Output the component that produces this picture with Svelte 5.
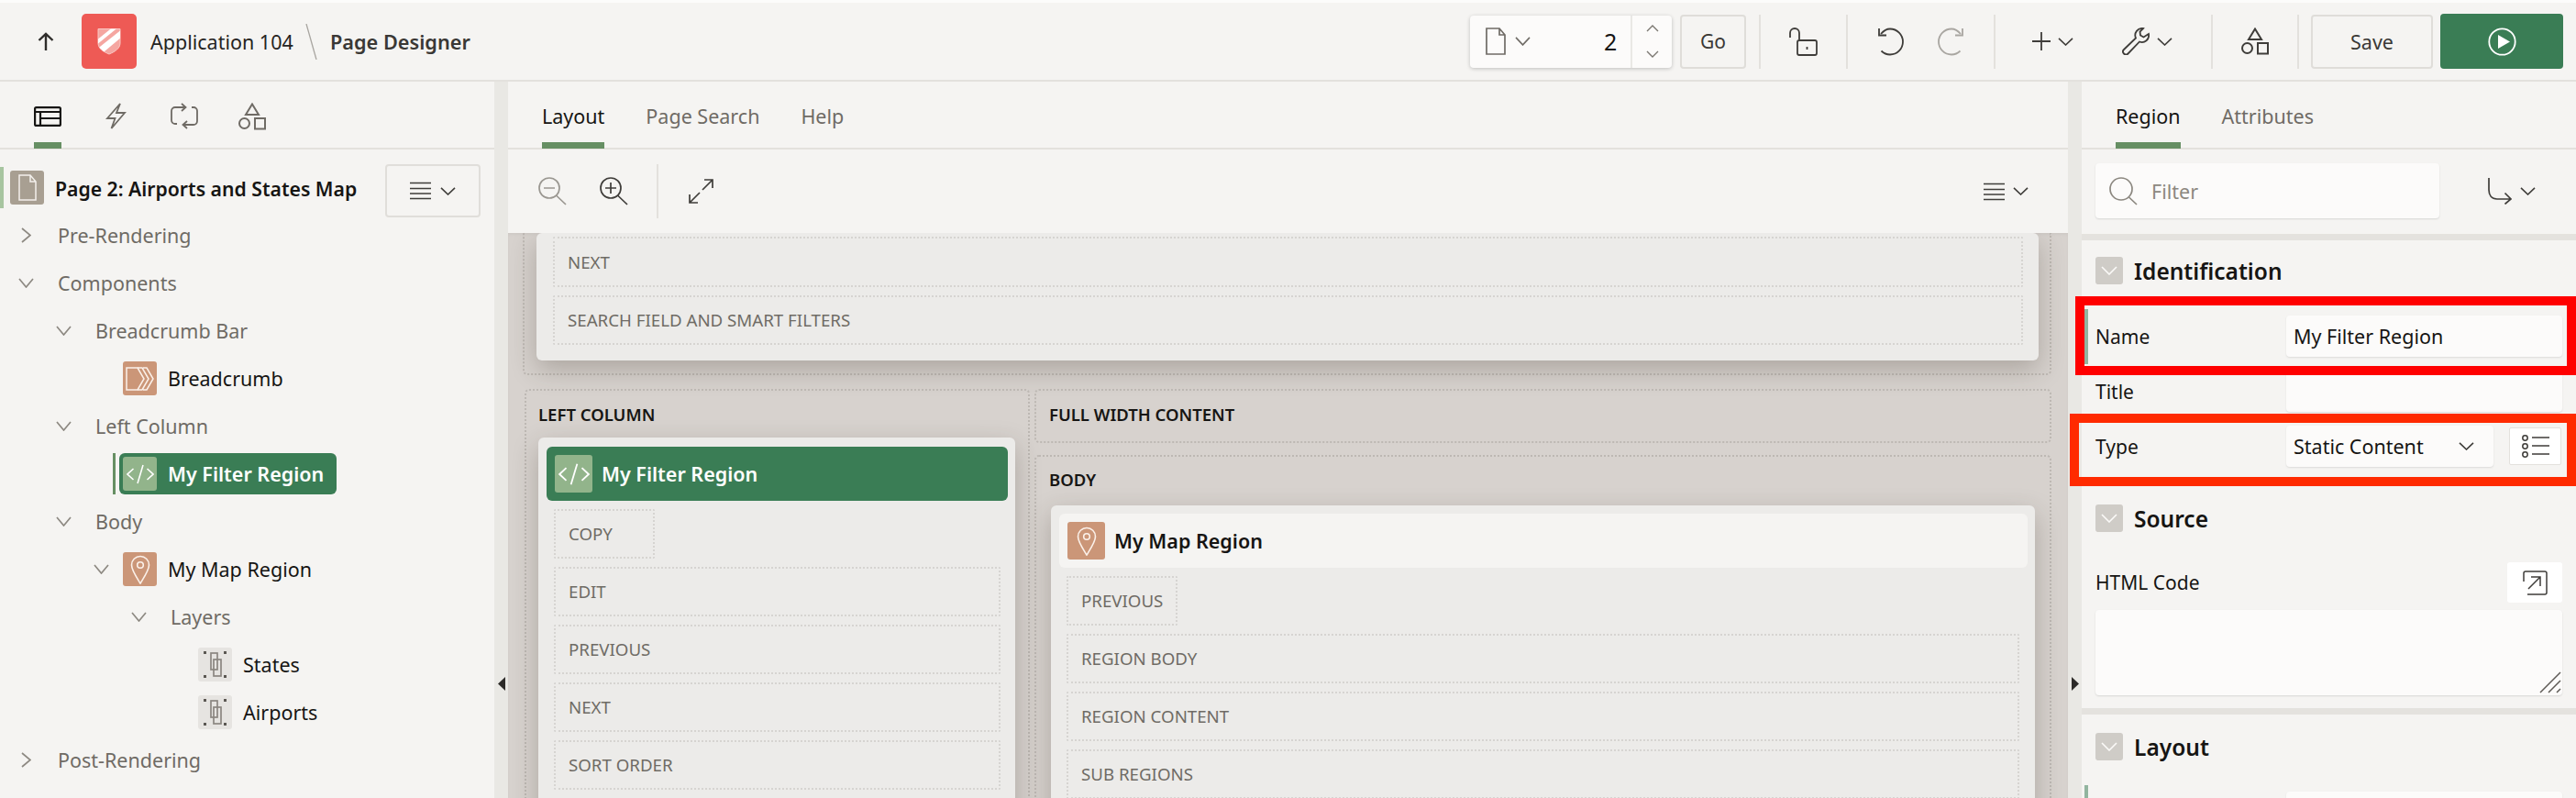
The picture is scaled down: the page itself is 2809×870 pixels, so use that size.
<script>
  const topRows = ['NEXT', 'SEARCH FIELD AND SMART FILTERS'];
  const leftRows = ['EDIT', 'PREVIOUS', 'NEXT', 'SORT ORDER'];
  const bodyRows = ['REGION BODY', 'REGION CONTENT', 'SUB REGIONS'];
</script>

{#snippet chev(w = 17, h = 9, color = '#3f3d3a')}
  <svg class="ic" width={w} height={h} viewBox="0 0 17 9" preserveAspectRatio="none" fill="none" stroke={color} stroke-width="1.6"><path d="M1 .8 8.5 8 16 .8"/></svg>
{/snippet}
{#snippet treeDown()}
  <span class="chev"><svg width="17" height="11" viewBox="0 0 17 11" fill="none" stroke="#8d8982" stroke-width="1.7"><path d="M1 1l7.5 9L16 1"/></svg></span>
{/snippet}
{#snippet treeRight()}
  <span class="chev"><svg width="11" height="17" viewBox="0 0 11 17" fill="none" stroke="#8d8982" stroke-width="1.7"><path d="M1 1l9 7.5L1 16"/></svg></span>
{/snippet}
{#snippet burger(color = '#3f3d3a')}
  <svg class="ic" width="23" height="20" viewBox="0 0 23 20" fill="none" stroke={color} stroke-width="1.7"><path d="M0 1.5h23M0 7.5h23M0 13h23M0 18.5h23"/></svg>
{/snippet}
{#snippet shapes(color)}
  <svg class="ic" width="30" height="30" viewBox="0 0 30 30" fill="none" stroke={color} stroke-width="2"><path d="M15 1.5 22 13H8z"/><circle cx="6.5" cy="22.5" r="5.5"/><rect x="18" y="17" width="11" height="11.5"/></svg>
{/snippet}
{#snippet pin()}
  <svg width="22" height="32" viewBox="0 0 22 32" fill="none" stroke="#fbf1ea" stroke-width="1.6"><path d="M11 31C6 23 1.5 16.5 1.5 11a9.5 9.5 0 0 1 19 0C20.500 16.500 16 23 11 31z"/><circle cx="11" cy="11" r="3.300"/></svg>
{/snippet}
{#snippet code(size = 30)}
  <svg width={size} height={size} viewBox="0 0 30 30" fill="none" stroke="#fff" stroke-width="1.600"><path d="M7.500 9 1 15l6.500 6M22.500 9 29 15l-6.500 6M18 5l-6 20"/></svg>
{/snippet}
{#snippet layer()}
  <span class="tico layer">
    <svg width="27" height="33" viewBox="0 0 27 33" fill="none"><g fill="#5b5853"><rect x="1" y="2" width="3" height="3"/><rect x="23" y="2" width="3" height="3"/><rect x="1" y="28" width="3" height="3"/><rect x="23" y="28" width="3" height="3"/></g><g stroke="#8b8781" stroke-width="1.700"><rect x="9" y="4" width="7" height="18"/><rect x="12" y="11" width="8" height="18"/></g></svg>
  </span>
{/snippet}
{#snippet sectionHead(title)}
  <div class="sect-head">
    <span class="sect-box"><svg width="18" height="10" viewBox="0 0 18 10" fill="none" stroke="#fbfaf8" stroke-width="1.600"><path d="M1 1l8 8 8-8"/></svg></span>
    <span class="sect-title">{title}</span>
  </div>
{/snippet}

<div class="app">
  <header class="top">
    <div class="brand">
      <svg class="up" width="18" height="20" viewBox="0 0 18 20" fill="none" stroke="#2f2d2b" stroke-width="2.400"><path d="M9 20V2M1.500 9 9 1.800 16.500 9"/></svg>
      <span class="logo">
        <svg width="26" height="30" viewBox="0 0 26 30">
          <defs><clipPath id="sh"><path d="M1 1.500h24V17c0 6-6 9.500-12 12C7 26.500 1 23 1 17z"/></clipPath></defs>
          <path d="M1 1.500h24V17c0 6-6 9.500-12 12C7 26.500 1 23 1 17z" fill="#f5a6a1" stroke="#f9c9c5" stroke-width="1"/>
          <g clip-path="url(#sh)" fill="#fff"><path d="M-2 15 19-2h6L-2 20z"/><path d="M-2 25 27 2v8L2 31h-4z"/></g>
        </svg>
      </span>
      <span class="app-name">Application 104</span>
      <svg class="slash" width="13" height="39" viewBox="0 0 13 39" fill="none" stroke="#a8a5a0" stroke-width="1.300"><path d="M1 0l11 39"/></svg>
      <span class="designer">Page Designer</span>
    </div>

    <div class="tools">
      <div class="pagegroup">
        <svg class="ic pg-doc" width="22" height="30" viewBox="0 0 22 30" fill="none" stroke="#6f6b65" stroke-width="1.700"><path d="M1 1h14l6 7v21H1zM15 1v7h6"/></svg>
        <span class="pg-chev">{@render chev(17, 10, '#6f6b65')}</span>
        <span class="pg-num">2</span>
        <span class="pg-spin">
          <svg width="14" height="8" viewBox="0 0 14 8" fill="none" stroke="#7b7771" stroke-width="1.400"><path d="M1 7l6-6 6 6"/></svg>
          <svg width="14" height="8" viewBox="0 0 14 8" fill="none" stroke="#7b7771" stroke-width="1.400"><path d="M1 1l6 6 6-6"/></svg>
        </span>
      </div>
      <button class="btn go">Go</button>
      <span class="sep first"></span>
      <span class="cell w-lock">
        <svg class="ic" width="31" height="31" viewBox="0 0 31 31" fill="none" stroke="#3f3d3a" stroke-width="1.800"><path d="M1 11V6a5 5 0 0 1 10 0v7"/><rect x="9" y="14" width="21" height="16" rx="2"/><path d="M19.500 21v3"/></svg>
      </span>
      <span class="sep"></span>
      <span class="cell w-undo">
        <svg class="ic" width="29" height="31" viewBox="0 0 29 31" fill="none" stroke="#3f3d3a" stroke-width="1.800"><path d="M4 7C7 3.500 10.500 1.500 14 1.500a14 14 0 0 1 0 28c-3.500 0-7-1.500-9.500-4"/><path d="M2 1v7.500h8"/></svg>
        <svg class="ic mirror" width="29" height="31" viewBox="0 0 29 31" fill="none" stroke="#a9a6a1" stroke-width="1.800"><path d="M4 7C7 3.500 10.500 1.500 14 1.500a14 14 0 0 1 0 28c-3.500 0-7-1.500-9.500-4"/><path d="M2 1v7.500h8"/></svg>
      </span>
      <span class="sep"></span>
      <span class="cell w-add">
        <span class="pair">
          <svg class="ic" width="20" height="20" viewBox="0 0 20 20" fill="none" stroke="#3f3d3a" stroke-width="1.800"><path d="M10 0v20M0 10h20"/></svg>
          {@render chev(17, 9)}
        </span>
        <span class="pair">
          <svg class="ic" width="30" height="30" viewBox="0 0 30 30" fill="none" stroke="#3f3d3a" stroke-width="1.800"><path d="M23 1a7.500 7.500 0 0 0-8 10.500L2 24a3 3 0 0 0 4.500 4.500L19 15.500A7.500 7.500 0 0 0 29 7l-5.500 3.500-3.500-2-.5-4z"/></svg>
          {@render chev(17, 9)}
        </span>
      </span>
      <span class="sep"></span>
      <span class="cell w-shapes">{@render shapes('#3f3d3a')}</span>
      <span class="sep"></span>
      <button class="btn save">Save</button>
      <button class="run">
        <svg width="31" height="31" viewBox="0 0 31 31" fill="none"><circle cx="15.500" cy="15.500" r="14.200" stroke="#fff" stroke-width="1.800"/><path d="M11 8l13 7.500L11 23z" fill="#fff"/></svg>
      </button>
    </div>
  </header>

  <main class="panes">
    <section class="left">
      <nav class="tabs left-tabs">
        <span class="tab-i on">
          <svg class="ic" width="30" height="22" viewBox="0 0 30 22" fill="none" stroke="#161513" stroke-width="2.200"><rect x="1.100" y="1.100" width="27.800" height="19.800" rx="1.500"/><path d="M1 6h28M7 6v15M7 13h22"/></svg>
        </span>
        <span class="tab-i w-bolt">
          <svg class="ic" width="23" height="29" viewBox="0 0 23 29" fill="none" stroke="#6f6b65" stroke-width="1.800"><path d="M16 1 2 17h8.500L6.500 28 21 11h-9z"/></svg>
        </span>
        <span class="tab-i w-sync">
          <svg class="ic" width="30" height="29" viewBox="0 0 30 29" fill="none" stroke="#6f6b65" stroke-width="1.800"><path d="M17 5H5a4 4 0 0 0-4 4v10a4 4 0 0 0 4 4h2M13 24h12a4 4 0 0 0 4-4V9a4 4 0 0 0-4-4h-2M12 1l4.500 4L12 9M18 20l-4.500 4 4.500 4"/></svg>
        </span>
        <span class="tab-i w-shape">{@render shapes('#6f6b65')}</span>
      </nav>

      <div class="page-row">
        <span class="page-mark"></span>
        <span class="page-ico">
          <svg width="20" height="29" viewBox="0 0 20 29" fill="none" stroke="#f3f0ec" stroke-width="1.500"><path d="M1 1h12l6 7v20H1zM13 1v7h6"/></svg>
        </span>
        <span class="page-title">Page 2: Airports and States Map</span>
        <button class="menu-btn">{@render burger()}{@render chev(17, 9)}</button>
      </div>

      <div class="tree">
        <div class="node l0 group">{@render treeRight()}Pre-Rendering</div>
        <div class="node l0 group">{@render treeDown()}Components</div>
        <div class="node l1 group">{@render treeDown()}Breadcrumb Bar</div>
        <div class="node leaf2">
          <span class="tico orange">
            <svg width="31" height="26" viewBox="0 0 31 26" fill="none" stroke="#fbf1ea" stroke-width="1.500"><path d="M1 1h12l7 12-7 12H1zM1 1l0 0"/><path d="M1 1h0M13 1h5l7 12-7 12h-5M19 1h4l7 12-7 12h-4"/></svg>
          </span>
          <span class="leaf">Breadcrumb</span>
        </div>
        <div class="node l1 group">{@render treeDown()}Left Column</div>
        <div class="node selected">
          <span class="sel-mark"></span>
          <span class="pill">
            <span class="tico green">{@render code()}</span>
            <span class="pill-text">My Filter Region</span>
          </span>
        </div>
        <div class="node l1 group">{@render treeDown()}Body</div>
        <div class="node l2">
          {@render treeDown()}
          <span class="tico orange">{@render pin()}</span>
          <span class="leaf">My Map Region</span>
        </div>
        <div class="node l3 group">{@render treeDown()}Layers</div>
        <div class="node leaf4">{@render layer()}<span class="leaf">States</span></div>
        <div class="node leaf4">{@render layer()}<span class="leaf">Airports</span></div>
        <div class="node l0 group">{@render treeRight()}Post-Rendering</div>
      </div>
    </section>

    <div class="gutter">
      <svg width="8" height="15" viewBox="0 0 8 15"><path d="M8 0v15L0 7.500z" fill="#2c2a28"/></svg>
    </div>

    <section class="center">
      <nav class="tabs center-tabs">
        <span class="tab on">Layout</span>
        <span class="tab">Page Search</span>
        <span class="tab">Help</span>
      </nav>
      <div class="toolbar">
        <svg class="ic" width="31" height="31" viewBox="0 0 31 31" fill="none" stroke="#9a9791" stroke-width="1.700"><circle cx="12" cy="12" r="11"/><path d="M6 12h12M19.500 20 30 30"/></svg>
        <svg class="ic zoom-in" width="31" height="31" viewBox="0 0 31 31" fill="none" stroke="#3f3d3a" stroke-width="1.700"><circle cx="12" cy="12" r="11"/><path d="M6 12h12M12 6v12M19.500 20 30 30"/></svg>
        <span class="tb-sep"></span>
        <svg class="ic expand" width="27" height="27" viewBox="0 0 27 27" fill="none" stroke="#3f3d3a" stroke-width="1.700"><path d="M15 12 26 1M17 1h9v9M12 15 1 26M1 17v9h9"/></svg>
        <span class="tb-menu">{@render burger()}{@render chev(17, 9)}</span>
      </div>

      <div class="canvas">
        <div class="slot top-slot">
          <div class="card top-card">
            {#each topRows as r}<div class="pos">{r}</div>{/each}
          </div>
        </div>

        <div class="cols">
          <div class="slot col-left">
            <div class="slot-label">LEFT COLUMN</div>
            <div class="card side-card">
              <div class="comp active">
                <span class="tico big green">{@render code(34)}</span>
                <span class="pill-text">My Filter Region</span>
              </div>
              <div class="pos short copy">COPY</div>
              {#each leftRows as r}<div class="pos">{r}</div>{/each}
            </div>
          </div>
          <div class="col-right">
            <div class="slot full">
              <div class="slot-label">FULL WIDTH CONTENT</div>
            </div>
            <div class="slot body">
              <div class="slot-label">BODY</div>
              <div class="card body-card">
                <div class="comp plain">
                  <span class="tico big orange">{@render pin()}</span>
                  <span class="comp-text">My Map Region</span>
                </div>
                <div class="pos short prev">PREVIOUS</div>
                {#each bodyRows as r}<div class="pos">{r}</div>{/each}
              </div>
            </div>
          </div>
        </div>
      </div>
    </section>

    <div class="gutter right-g">
      <svg width="8" height="15" viewBox="0 0 8 15"><path d="M0 0v15l8-7.500z" fill="#2c2a28"/></svg>
    </div>

    <section class="right">
      <nav class="tabs right-tabs">
        <span class="tab on">Region</span>
        <span class="tab">Attributes</span>
      </nav>
      <div class="filter-row">
        <div class="filter">
          <svg class="ic" width="31" height="31" viewBox="0 0 31 31" fill="none" stroke="#8c8880" stroke-width="1.700"><circle cx="13" cy="13" r="12"/><path d="M21.500 22 30 30"/></svg>
          <span class="ph">Filter</span>
        </div>
        <span class="goto">
          <svg class="ic" width="27" height="29" viewBox="0 0 27 29" fill="none" stroke="#3f3d3a" stroke-width="1.700"><path d="M2 0v13c0 6 3 10 9 10h15M19.500 16.500 26 23l-6.500 5.500"/></svg>
          {@render chev(17, 9)}
        </span>
      </div>
      <div class="band"></div>
      {@render sectionHead('Identification')}
      <div class="row mark">
        <span class="lbl">Name</span>
        <span class="field">My Filter Region</span>
      </div>
      <div class="row">
        <span class="lbl">Title</span>
        <span class="field"></span>
      </div>
      <div class="row">
        <span class="lbl">Type</span>
        <span class="type-wrap">
          <span class="field select">Static Content {@render chev(17, 9)}</span>
          <span class="list-btn">
            <svg width="30" height="25" viewBox="0 0 30 25" fill="none" stroke="#3f3d3a" stroke-width="1.500"><circle cx="3.500" cy="3.500" r="2.700"/><circle cx="3.500" cy="12.500" r="2.700"/><circle cx="3.500" cy="21.500" r="2.700"/><path d="M11 3h19M11 12h19M11 21h19"/></svg>
          </span>
        </span>
      </div>
      <div class="sect-gap source-head">{@render sectionHead('Source')}</div>
      <div class="html-row">
        <span class="lbl">HTML Code</span>
        <span class="open-btn">
          <svg width="27" height="27" viewBox="0 0 27 27" fill="none" stroke="#3f3d3a" stroke-width="1.500"><path d="M1 12V3a2 2 0 0 1 2-2h21a2 2 0 0 1 2 2v21a2 2 0 0 1-2 2H5M6 20 19 7M9 7h10v10"/></svg>
        </span>
      </div>
      <div class="textarea">
        <svg class="grip" width="24" height="24" viewBox="0 0 24 24" fill="none" stroke="#5d5a55" stroke-width="1.500"><path d="M1 23 23 1M10 23 23 10M19 23l4-4"/></svg>
      </div>
      <div class="band band2"></div>
      <div class="layout-head">{@render sectionHead('Layout')}</div>
      <div class="row mark tail">
        <span class="lbl"></span>
        <span class="field"></span>
      </div>
    </section>
  </main>

  <div class="note note-a"></div>
  <div class="note note-b"></div>
</div>

<style>
  :global(body) { margin: 0; background: #f5f4f2; }
  .app {
    position: relative;
    width: 2809px;
    height: 870px;
    overflow: hidden;
    display: flex;
    flex-direction: column;
    background: #f5f4f2;
    color: #161513;
    font-family: "Noto Sans", "Open Sans", sans-serif;
    font-size: 21.5px;
  }
  .ic { display: block; flex: none; }
  button { font-family: inherit; cursor: default; }

  /* header */
  .top {
    flex: none;
    box-sizing: border-box;
    height: 89px;
    border-top: 3px solid #fcfcfb;
    border-bottom: 2px solid #e3e1dd;
    display: flex;
    align-items: center;
    justify-content: space-between;
    padding: 0 14px 0 41px;
  }
  .brand { display: flex; align-items: center; }
  .up { margin-right: 30px; }
  .logo {
    width: 60px; height: 60px; border-radius: 5px; background: #ee5a55;
    display: flex; align-items: center; justify-content: center; margin-right: 15px;
  }
  .app-name { font-size: 21.500px; color: #26241f; width: 169px; white-space: nowrap; }
  .slash { margin-right: 14px; }
  .designer { font-size: 21.700px; font-weight: 600; color: #3a3835; white-space: nowrap; }
  .tools { display: flex; align-items: center; height: 60px; }
  .pagegroup {
    box-sizing: border-box;
    width: 220px; height: 57px; background: #fcfbfa; border-radius: 4px;
    box-shadow: 0 1px 4px rgba(0,0,0,.22);
    display: flex; align-items: center; padding-left: 17px;
  }
  .pg-chev { margin-left: 10px; }
  .pg-num { margin-left: 80px; width: 30px; font-size: 25px; color: #161513; text-align: left; }
  .pg-spin {
    align-self: stretch; width: 44px; border-left: 2px solid #e9e8e5;
    display: flex; flex-direction: column; align-items: center; justify-content: center; gap: 20px;
  }
  .btn {
    box-sizing: border-box; height: 59px; background: #f5f4f2; color: #3a3835;
    border: 2px solid #dfddd9; border-radius: 4px; font-size: 21px; padding: 0;
  }
  .go { width: 72px; margin-left: 9px; }
  .sep { width: 2px; height: 59px; background: #e3e1dd; flex: none; }
  .sep.first { margin-left: 14px; }
  .cell { display: flex; align-items: center; justify-content: center; flex: none; }
  .w-lock { width: 93px; }
  .w-undo { width: 159px; gap: 37px; }
  .w-add { box-sizing: border-box; width: 235px; gap: 53px; padding-right: 2px; }
  .pair { display: flex; align-items: center; gap: 8px; }
  .w-shapes { width: 92px; }
  .mirror { transform: scaleX(-1); }
  .save { width: 133px; margin-left: 13px; font-size: 21.500px; }
  .run {
    width: 134px; height: 60px; margin-left: 8px; background: #3a7d55; border: 0; border-radius: 4px;
    display: flex; align-items: center; justify-content: center; padding: 0;
  }

  /* panes */
  .panes { flex: 1; display: flex; min-height: 0; }
  .left { width: 539px; flex: none; }
  .gutter {
    width: 15px; flex: none; background: #e9e8e4;
    box-sizing: border-box; padding-top: 649px;
    display: flex; justify-content: center;
  }
  .right-g { padding-left: 4px; justify-content: flex-start; }
  .center { flex: 1; min-width: 0; display: flex; flex-direction: column; }
  .right { width: 539px; flex: none; }

  .tabs {
    box-sizing: border-box; height: 74px; border-bottom: 2px solid #e3e1dd;
    display: flex; color: #6f6b65;
  }
  .tab {
    display: flex; align-items: center; box-sizing: border-box; height: 73px; white-space: nowrap;
    margin-right: 45px; padding-top: 8px; border-bottom: 7px solid transparent;
  }
  .tab.on { color: #161513; border-bottom-color: #668f63; }
  .left-tabs { padding-left: 37px; }
  .tab-i {
    width: 30px; height: 73px; box-sizing: border-box; padding-top: 23px;
    border-bottom: 7px solid transparent; display: flex; justify-content: center; flex: none;
  }
  .tab-i.on { padding-top: 27px; border-bottom-color: #668f63; }
  .w-bolt { margin-left: 44px; }
  .w-sync { margin-left: 45px; }
  .w-shape { margin-left: 44px; }
  .center-tabs { padding-left: 37px; }
  .right-tabs { padding-left: 37px; }

  /* page row */
  .page-row { box-sizing: border-box; height: 69px; padding-top: 19px; display: flex; align-items: flex-start; }
  .page-mark { width: 4px; height: 45px; background: #a7c5a0; flex: none; }
  .page-ico {
    width: 37px; height: 37px; margin: 4px 12px 0 7px; border-radius: 3px; background: #a89f92;
    display: flex; align-items: center; justify-content: center; flex: none;
  }
  .page-title { font-weight: 600; font-size: 21.200px; height: 45px; line-height: 48px; width: 360px; white-space: nowrap; }
  .menu-btn {
    box-sizing: border-box; width: 104px; height: 58px; margin-top: -3px; flex: none;
    background: #f5f4f2; border: 2px solid #e0deda; border-radius: 4px;
    display: flex; align-items: center; justify-content: center; gap: 10px; padding: 0;
  }

  /* tree */
  .node { height: 52px; padding-bottom: 3px; display: flex; align-items: center; white-space: nowrap; box-sizing: border-box; }
  .group { color: #6f6b65; }
  .chev { width: 20px; display: flex; justify-content: center; margin-right: 25px; flex: none; }
  .l0 { padding-left: 18px; }
  .l1 { padding-left: 59px; }
  .l2 { padding-left: 100px; }
  .l2 .chev { margin-right: 14px; }
  .l3 { padding-left: 141px; }
  .leaf2 { padding-left: 134px; }
  .leaf4 { padding-left: 216px; }
  .tico {
    width: 37px; height: 37px; border-radius: 3px; flex: none; margin-right: 12px;
    display: flex; align-items: center; justify-content: center;
  }
  .tico.big { width: 41px; height: 41px; margin-right: 10px; }
  .orange { background: #cb9678; }
  .green { background: #92b48b; }
  .layer { background: #e6e4e1; }
  .leaf { color: #161513; }
  .selected { padding-left: 123px; }
  .sel-mark { width: 3px; height: 45px; background: #668f63; margin-right: 4px; flex: none; }
  .pill {
    height: 45px; width: 237px; box-sizing: border-box; padding-left: 4px; background: #3a7d55; border-radius: 6px;
    display: flex; align-items: center; flex: none;
  }
  .pill-text { color: #fff; font-weight: 600; }

  /* center */
  .toolbar {
    box-sizing: border-box; height: 91px; display: flex; align-items: center; padding: 0 43px 0 33px;
  }
  .zoom-in { margin-left: 36px; }
  .tb-sep { width: 2px; height: 59px; background: #e3e1dd; margin-left: 31px; }
  .expand { margin-left: 33px; }
  .tb-menu { margin-left: auto; display: flex; align-items: center; gap: 9px; }
  .canvas {
    flex: 1; min-height: 0; overflow: hidden; box-sizing: border-box;
    background: #d7d2ce; padding: 0 18px 0 16px;
    box-shadow: inset 0 2px 3px rgba(0,0,0,.04);
  }
  .slot { border: 2px dotted #bdb8b3; box-sizing: border-box; border-radius: 5px; }
  .top-slot {
    height: 155px; border-top: 0; border-radius: 0 0 5px 5px; padding: 0 12px 0 13px;
  }
  .card { background: #ecebe9; border-radius: 6px; box-shadow: 0 10px 28px rgba(60,50,40,.28); }
  .top-card {
    box-sizing: border-box; height: 139px; padding: 4px 17px 0 18px;
    display: flex; flex-direction: column; gap: 9px;
  }
  .top-card .pos { padding-left: 14px; }
  .pos {
    box-sizing: border-box; height: 54.500px; flex: none; border: 2px dotted #d6d4d1; border-radius: 2px;
    display: flex; align-items: center; padding-left: 14px;
    font-size: 18.700px; color: #6f6b65; white-space: nowrap;
  }
  .cols {
    margin-top: 15px; display: grid; grid-template-columns: 551px 1fr; gap: 5px; margin-left: 2px;
  }
  .col-left { height: 470px; padding: 0 13px; border-bottom: 0; }
  .slot-label { font-size: 18.500px; font-weight: 600; color: #161513; white-space: nowrap; }
  .col-left > .slot-label { height: 51px; line-height: 52px; }
  .side-card {
    box-sizing: border-box; width: 520px; height: 470px; padding: 10px 8px 0 9px;
    display: flex; flex-direction: column; gap: 8.500px;
  }
  .comp { height: 59px; box-sizing: border-box; flex: none; border-radius: 6px; display: flex; align-items: center; padding-left: 9px; }
  .comp.active { background: #3a7d55; }
  .comp.plain { background: #f5f4f2; }
  .comp-text { font-weight: 600; color: #161513; }
  .side-card .pos { margin: 0 8px 0 8px; }
  .copy { width: 110px; align-self: flex-start; }
  .prev { width: 121px; align-self: flex-start; }
  .col-right { display: flex; flex-direction: column; gap: 13px; }
  .full { height: 59px; padding-left: 14px; }
  .full .slot-label { line-height: 52px; }
  .body { padding: 0 16px 0 16px; flex: 1; border-bottom: 0; height: 380px; }
  .body .slot-label { height: 53px; line-height: 49px; margin-left: -2px; }
  .body-card {
    margin-left: 0; box-sizing: border-box; height: 400px; padding: 9px 8px 0 9px;
    display: flex; flex-direction: column; gap: 8.500px;
  }
  .body-card .pos { margin: 0 9px 0 8px; }

  /* right */
  .filter-row { box-sizing: border-box; height: 92px; padding: 15px 44px 0 15px; display: flex; align-items: flex-start; justify-content: space-between; }
  .filter {
    box-sizing: border-box; width: 375px; height: 60px; background: #fcfbfa; border-radius: 4px;
    box-shadow: 0 1px 2px rgba(0,0,0,.12);
    display: flex; align-items: center; padding-left: 15px; gap: 15px;
  }
  .ph { color: #8c8880; }
  .goto { display: flex; align-items: center; gap: 9px; height: 60px; }
  .band { height: 7px; background: #e4e2de; }
  .band2 { margin-top: 14px; }
  .sect-head { display: flex; align-items: flex-start; box-sizing: border-box; padding: 18px 0 0 15px; height: 75px; }
  .sect-box {
    width: 30px; height: 30px; border-radius: 3px; background: #cfccc7;
    display: flex; align-items: center; justify-content: center; flex: none;
  }
  .sect-title { font-size: 24.500px; font-weight: 600; margin-left: 12px; line-height: 32px; white-space: nowrap; }
  .row {
    box-sizing: border-box; height: 60px; margin-left: 3px; padding: 7px 15px 8px 8px;
    border-left: 4px solid transparent;
    display: grid; grid-template-columns: 208px 301px; align-items: center;
  }
  .row.mark { border-left-color: #92b59f; }
  .lbl { color: #161513; font-size: 21px; }
  .field {
    box-sizing: border-box; height: 45px; background: #fcfbfa; border-radius: 4px; padding-left: 8px;
    display: flex; align-items: center; box-shadow: 0 1px 2px rgba(0,0,0,.1);
  }
  .type-wrap { display: flex; align-items: center; justify-content: space-between; width: 301px; }
  .select { width: 226px; justify-content: space-between; padding-right: 21px; white-space: nowrap; }
  .list-btn {
    width: 57px; height: 41px; box-sizing: border-box; background: #fff; border: 1px solid #e3e1dd; border-radius: 2px;
    display: flex; align-items: center; justify-content: center; margin-right: 1px;
  }
  .source-head { margin-top: 15px; }
  .source-head .sect-head { height: 80px; }
  .html-row { display: flex; align-items: center; justify-content: space-between; padding: 0 15px; height: 44px; margin-top: 1px; }
  .open-btn {
    width: 60px; height: 44px; background: #fff; border-radius: 3px;
    display: flex; align-items: center; justify-content: center;
  }
  .textarea {
    box-sizing: border-box; position: relative; margin: 8px 15px 0; height: 93px; background: #fcfbfa; border-radius: 4px;
    box-shadow: 0 1px 2px rgba(0,0,0,.12);
  }
  .grip { position: absolute; right: 1px; bottom: 2px; }
  .layout-head .sect-head { padding-top: 20px; height: 77px; }
  .tail { padding-top: 7px; }

  /* annotation overlays */
  .note { position: absolute; box-sizing: border-box; pointer-events: none; }
  .note-a { left: 2263px; top: 323px; width: 546px; height: 86px; border: 10px solid #ff0000; }
  .note-b { left: 2257px; top: 451px; width: 552px; height: 79px; border: 10px solid #ff2a00; }
</style>
